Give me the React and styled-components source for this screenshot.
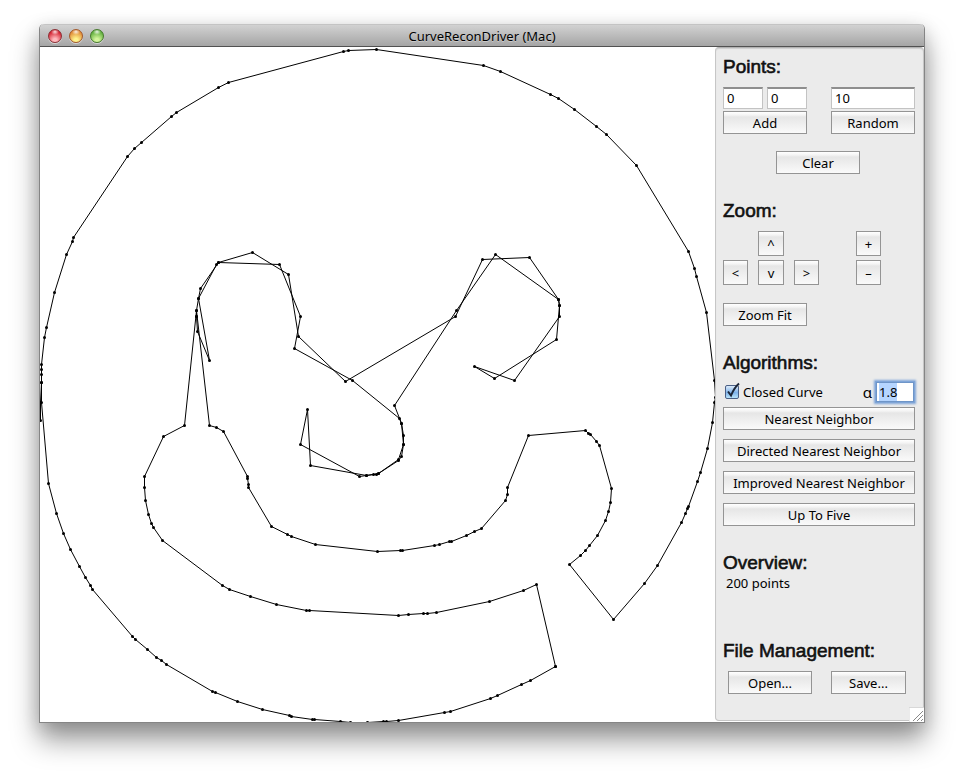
import React, { useEffect, useRef } from 'react';
import styled, { createGlobalStyle } from 'styled-components';

const GlobalStyle = createGlobalStyle`
  *, *::before, *::after { box-sizing: border-box; }
  body {
    margin: 0;
    background: #fff;
    color: #000;
    font: 13px/16px "Noto Sans", "Open Sans", sans-serif;
    overflow-x: hidden;
  }
  button, input { font: inherit; color: inherit; }
`;

const Desktop = styled.div`
  padding: 24px 39px 54px;
`;

const Window = styled.main`
  border: 1px solid #858585;
  border-top: 0;
  border-radius: 5px 5px 0 0;
  background: #fff;
  box-shadow: 0 17px 28px rgba(0, 0, 0, 0.4), 0 4px 18px rgba(0, 0, 0, 0.14);
`;

const TitleBar = styled.header`
  display: grid;
  grid-template-columns: 1fr auto 1fr;
  align-items: center;
  height: 23px;
  padding: 0 8px;
  border-top: 1px solid #c4c4c4;
  border-bottom: 1px solid #515151;
  border-radius: 5px 5px 0 0;
  background: linear-gradient(#d2d2d2, #a5a5a5);
`;

const Lights = styled.div`
  display: flex;
  gap: 7px;
`;

const Light = styled.button`
  width: 14px;
  height: 14px;
  padding: 0;
  border: 1px solid ${(p) => p.$rim};
  border-radius: 50%;
  background:
    radial-gradient(ellipse 4px 3px at 50% 15%, rgba(255, 255, 255, 0.85), transparent),
    radial-gradient(circle at 50% 85%, ${(p) => p.$glow} 15%, ${(p) => p.$color} 75%);
  box-shadow: 0 1px 0 rgba(255, 255, 255, 0.5);
`;

const Title = styled.h1`
  margin: 0;
  font-size: 13px;
  line-height: 20px;
  font-weight: 400;
  text-shadow: 0 1px 0 rgba(255, 255, 255, 0.35);
`;

const Content = styled.div`
  position: relative;
  display: flex;
  align-items: stretch;
`;

const Plot = styled.svg`
  display: block;
  flex: 1;
  min-width: 0;
  align-self: flex-start;
  aspect-ratio: 1;
  overflow: hidden;
`;

const Sidebar = styled.aside`
  flex: none;
  width: 209px;
  padding: 0 0 1px;
  display: flex;
`;

const Panel = styled.form`
  flex: 1;
  padding: 7px 8px 26px 7px;
  border: 1px solid #c6c6c6;
  border-top-color: #b2b2b2;
  border-radius: 4px;
  background: #ebebeb;
  box-shadow: inset 0 1px 1px #cfcfcf;
`;

const Section = styled.section`
  margin-bottom: ${(p) => p.$after || 0}px;
`;

const Heading = styled.h2`
  margin: 0;
  padding-bottom: ${(p) => (p.$tight ? 0 : 8)}px;
  font: 400 19px/24px "Liberation Sans", Arial, sans-serif;
  -webkit-text-stroke: 0.6px #111;
  color: #111;
`;

const Pair = styled.div`
  display: grid;
  grid-template-columns: 1fr 1fr;
  column-gap: 24px;
  row-gap: 2px;
`;

const Coordinates = styled.div`
  display: grid;
  grid-template-columns: 1fr 1fr;
  gap: 4px;
`;

const Field = styled.input`
  width: 100%;
  height: 22px;
  min-width: 0;
  padding: 0 3px 2px;
  border: 1px solid #c3c3c3;
  border-top: 2px solid #8e8e8e;
  border-radius: 0;
  background: #fff;
  outline: none;
`;

const AlphaField = styled(Field)`
  width: 38px;
  height: 20px;
  margin-right: 1px;
  padding: 0 2px;
  border: 1px solid #6e95c8;
  box-shadow: 0 0 0 1px #7fa5d8, 0 0 2px 2px #7fa5d8;
  &::selection { background: #b5d5ff; color: #000; }
`;

const Push = styled.button`
  display: block;
  width: ${(p) => p.$width || '100%'};
  height: ${(p) => (p.$square ? 25 : 23)}px;
  padding: 0;
  border: 1px solid #949494;
  border-radius: 0;
  background: linear-gradient(#fff 0, #f4f4f4 3px, #e6e6e6 5px, #fafafa 100%);
  line-height: 20px;
  text-align: center;
  white-space: nowrap;
`;

const ClearRow = styled.div`
  display: flex;
  justify-content: center;
  padding: 17px 2px 0 0;
`;

const ZoomPad = styled.div`
  display: grid;
  grid-template-columns: 25px 26px 25px 17px 25px;
  gap: 4px 10px;
  grid-template-areas: ". up . . in" "left down right . out";
  margin-bottom: 18px;
`;

const PadCell = styled.div`
  grid-area: ${(p) => p.$area};
`;

const OptionRow = styled.div`
  display: flex;
  align-items: center;
  justify-content: space-between;
  height: 26px;
  margin: -4px 0 2px;
`;

const CheckLabel = styled.label`
  display: flex;
  align-items: center;
  gap: 4px;
  padding-left: 2px;
`;

const CheckWrap = styled.span`
  position: relative;
  display: flex;
`;

const CheckBox = styled.input`
  appearance: none;
  width: 14px;
  height: 14px;
  margin: 0;
  border: 1px solid #4a5f85;
  border-radius: 2px;
  background: linear-gradient(#dcebfa, #7fb3ea 55%, #b9e4fb);
`;

const Tick = styled.svg`
  position: absolute;
  left: 0;
  bottom: 0;
  pointer-events: none;
  visibility: hidden;
  ${CheckBox}:checked + & { visibility: visible; }
`;

const AlphaLabel = styled.label`
  display: flex;
  align-items: center;
  gap: 4px;
  font-size: 15px;
`;

const AlphaInput = styled(AlphaField)`
  font-size: 13px;
`;

const Stack = styled.div`
  display: grid;
  gap: 9px;
`;

const Summary = styled.p`
  margin: 0;
  padding-left: 3px;
`;

const FileRow = styled.div`
  display: flex;
  gap: 19px;
  padding-left: 5px;
`;

const Grip = styled.svg`
  position: absolute;
  right: 0;
  bottom: 0;
  background: #fff;
`;

const outline = [
  [555, 666], [530, 680], [521, 684], [497, 695], [490, 698], [450, 711], [444, 712], [398, 720],
  [386, 721], [383, 721], [367, 722], [350, 722], [340, 721], [314, 719], [312, 719], [291, 716],
  [289, 715], [262, 709], [237, 701], [215, 692], [212, 691], [166, 664], [161, 660], [156, 657],
  [147, 649], [135, 639], [132, 636], [92, 589], [90, 585], [85, 577], [79, 566], [70, 549],
  [63, 533], [56, 513], [48, 483], [41, 402], [41, 382], [41, 374], [41, 369], [41, 364],
  [44, 337], [46, 327], [54, 292], [66, 254], [72, 241], [73, 237], [127, 156], [134, 148],
  [141, 142], [171, 116], [176, 112], [218, 87], [228, 82], [343, 51], [348, 50], [376, 49],
  [483, 65], [500, 71], [550, 94], [558, 98], [574, 109], [596, 126], [606, 134], [636, 165],
  [688, 251], [694, 268], [696, 276], [706, 312], [714, 380], [715, 397], [714, 402], [712, 422],
  [707, 448], [700, 472], [697, 481], [688, 506], [687, 508], [685, 513], [681, 522], [657, 565],
  [644, 583], [613, 619], [569, 564], [580, 555], [585, 550], [589, 545], [597, 535], [605, 520],
  [608, 511], [610, 502], [611, 488], [599, 445], [596, 441], [590, 434], [588, 433], [585, 430],
  [528, 435], [507, 487], [507, 494], [505, 500], [481, 528], [474, 531], [466, 535], [451, 541],
  [449, 541], [439, 544], [434, 545], [402, 550], [400, 550], [377, 551], [315, 544], [291, 536],
  [287, 534], [271, 526], [248, 487], [248, 484], [247, 478], [247, 476], [223, 431], [216, 427],
  [209, 425], [196, 310], [184, 425], [163, 436], [144, 476], [144, 487], [145, 500], [148, 514],
  [151, 523], [153, 527], [162, 540], [222, 585], [229, 589], [250, 596], [276, 604], [306, 610],
  [309, 610], [398, 615], [408, 614], [423, 613], [427, 613], [436, 612], [489, 601], [523, 590],
  [536, 584], [555, 666],
];

const innerLoop = [
  [196, 316], [197, 331], [209, 360], [198, 298], [216, 264], [218, 262], [279, 264], [300, 316],
  [294, 348], [352, 380], [399, 418], [401, 423], [403, 435], [403, 444], [401, 456], [398, 460],
  [378, 473], [376, 474], [373, 474], [366, 475], [310, 465], [307, 409], [300, 444], [359, 476],
  [366, 475], [378, 473], [398, 459], [403, 444], [401, 423], [394, 405], [456, 310], [495, 254],
  [558, 299], [559, 305], [559, 316], [514, 380], [474, 366], [494, 378], [556, 339], [559, 305],
  [558, 299], [529, 257], [482, 259], [455, 316], [345, 381], [298, 336], [288, 274], [252, 252],
  [218, 262], [200, 288], [198, 298], [196, 310], [196, 316],
];

const leftEdge = [[41, 382], [40, 402], [40, 420]];

const curves = [outline, innerLoop, leftEdge];

function CurvePlot() {
  return (
    <Plot viewBox="40 47 675 675" role="img" aria-label="Reconstructed curve">
      <g transform="translate(0.5 0.5)">
        {curves.map((points, i) => (
          <polyline key={i} points={points.join(' ')} fill="none" stroke="#000" strokeWidth="1" />
        ))}
        {curves.flat().map(([x, y], i) => (
          <circle key={i} cx={x} cy={y} r="1.5" />
        ))}
      </g>
    </Plot>
  );
}

function PushButton(props) {
  return <Push type="button" {...props} />;
}

const padButtons = [
  ['up', '^', 'Pan up'],
  ['in', '+', 'Zoom in'],
  ['left', '<', 'Pan left'],
  ['down', 'v', 'Pan down'],
  ['right', '>', 'Pan right'],
  ['out', '–', 'Zoom out'],
];

const algorithms = [
  'Nearest Neighbor',
  'Directed Nearest Neighbor',
  'Improved Nearest Neighbor',
  'Up To Five',
];

export default function App() {
  const alphaRef = useRef(null);

  useEffect(() => {
    alphaRef.current.focus({ preventScroll: true });
    alphaRef.current.select();
  }, []);

  return (
    <>
      <GlobalStyle />
      <Desktop>
        <Window>
          <TitleBar>
            <Lights>
              <Light aria-label="Close" $rim="#8c2f35" $color="#d3202f" $glow="#ffb9bd" />
              <Light aria-label="Minimize" $rim="#a3592a" $color="#e08a35" $glow="#fff38c" />
              <Light aria-label="Zoom window" $rim="#467a2c" $color="#5fae3c" $glow="#d3f59c" />
            </Lights>
            <Title>CurveReconDriver (Mac)</Title>
          </TitleBar>
          <Content>
            <CurvePlot />
            <Sidebar>
              <Panel onSubmit={(e) => e.preventDefault()}>
                <Section $after={25}>
                  <Heading>Points:</Heading>
                  <Pair>
                    <Coordinates>
                      <Field aria-label="X" defaultValue="0" />
                      <Field aria-label="Y" defaultValue="0" />
                    </Coordinates>
                    <Field aria-label="Random point count" defaultValue="10" />
                    <PushButton>Add</PushButton>
                    <PushButton>Random</PushButton>
                  </Pair>
                  <ClearRow>
                    <PushButton $width="84px">Clear</PushButton>
                  </ClearRow>
                </Section>

                <Section $after={25}>
                  <Heading>Zoom:</Heading>
                  <ZoomPad>
                    {padButtons.map(([area, glyph, label]) => (
                      <PadCell key={area} $area={area}>
                        <PushButton $square aria-label={label}>{glyph}</PushButton>
                      </PadCell>
                    ))}
                  </ZoomPad>
                  <PushButton $width="84px">Zoom Fit</PushButton>
                </Section>

                <Section $after={25}>
                  <Heading>Algorithms:</Heading>
                  <OptionRow>
                    <CheckLabel>
                      <CheckWrap>
                        <CheckBox type="checkbox" defaultChecked />
                        <Tick width="16" height="17" viewBox="0 0 16 17">
                          <path d="M3 9.5 6 13.5Q9 6 14 1.5" fill="none" stroke="#1c2638" strokeWidth="2" />
                        </Tick>
                      </CheckWrap>
                      Closed Curve
                    </CheckLabel>
                    <AlphaLabel>
                      α
                      <AlphaInput ref={alphaRef} defaultValue="1.8" />
                    </AlphaLabel>
                  </OptionRow>
                  <Stack>
                    {algorithms.map((name) => (
                      <PushButton key={name}>{name}</PushButton>
                    ))}
                  </Stack>
                </Section>

                <Section $after={48}>
                  <Heading $tight>Overview:</Heading>
                  <Summary>200 points</Summary>
                </Section>

                <Section>
                  <Heading>File Management:</Heading>
                  <FileRow>
                    <PushButton $width="84px">Open...</PushButton>
                    <PushButton $width="75px">Save...</PushButton>
                  </FileRow>
                </Section>
              </Panel>
            </Sidebar>
            <Grip width="15" height="15" viewBox="0 0 15 15" aria-hidden="true">
              <path d="M0 15V.5H15" fill="none" stroke="#d8d8d8" />
              <path d="M4 14 14 4M8 14 14 8M12 14 14 12" stroke="#888" />
            </Grip>
          </Content>
        </Window>
      </Desktop>
    </>
  );
}
